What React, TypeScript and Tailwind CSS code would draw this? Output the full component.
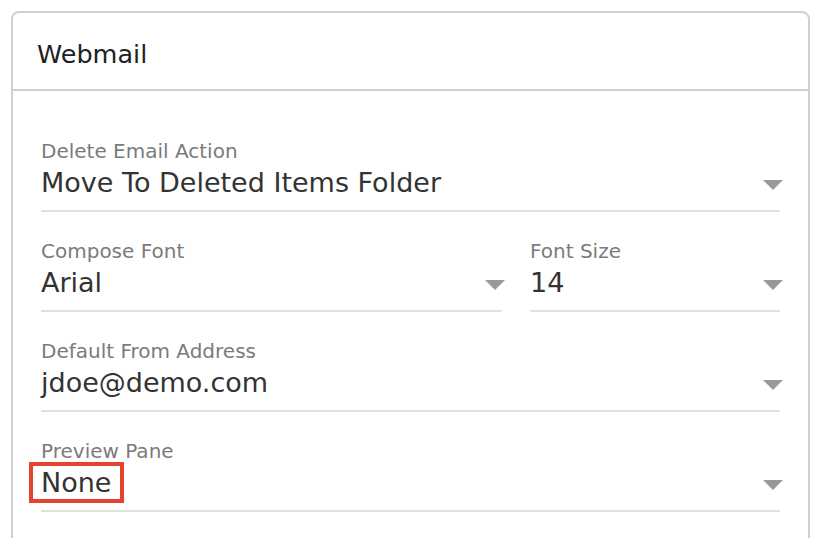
import React from "react";

interface SelectFieldProps {
  label: string;
  value: string;
  highlight?: boolean;
}

function Caret() {
  return (
    <svg width="20" height="10" viewBox="0 0 20 10" className="mt-[10px] -mr-[3px] shrink-0">
      <path d="M0 0 H20 L10 10 Z" fill="#999999" />
    </svg>
  );
}

function SelectField({ label, value, highlight }: SelectFieldProps) {
  return (
    <div className="border-b-2 border-[#e0e0e0] pb-[14px]">
      <div className="text-[20px] leading-[18px] text-[#7b7b7b]">{label}</div>
      <div className="mt-[10px] flex h-[26px] items-start">
        <div className="relative flex-1 text-[27px] leading-[26px] text-[#333333]">
          {value}
          {highlight && (
            <div className="absolute left-[-12px] top-[-8px] w-[95px] h-[41px] border-4 border-[#e5432d]" />
          )}
        </div>
        <Caret />
      </div>
    </div>
  );
}

export default function App() {
  return (
    <div
      className="h-[538px] overflow-hidden bg-white pt-[11px] pl-[11px]"
      style={{ fontFamily: '"DejaVu Sans", Verdana, sans-serif' }}
    >
      <div className="w-[799px] h-[600px] rounded-t-lg border-2 border-[#d0d0d0] bg-white">
        {/* Header */}
        <div className="h-[78px] border-b-2 border-[#d0d0d0] pl-[24px] pt-[26px]">
          <h1 className="text-[25.5px] leading-[30px] text-[#222222]">Webmail</h1>
        </div>

        {/* Settings */}
        <div className="px-7 pt-[51px] flex flex-col gap-[30px]">
          <SelectField label="Delete Email Action" value="Move To Deleted Items Folder" />
          <div className="grid grid-cols-[461px_250px] gap-x-7">
            <SelectField label="Compose Font" value="Arial" />
            <SelectField label="Font Size" value="14" />
          </div>
          <SelectField label="Default From Address" value="jdoe@demo.com" />
          <SelectField label="Preview Pane" value="None" highlight />
        </div>
      </div>
    </div>
  );
}
